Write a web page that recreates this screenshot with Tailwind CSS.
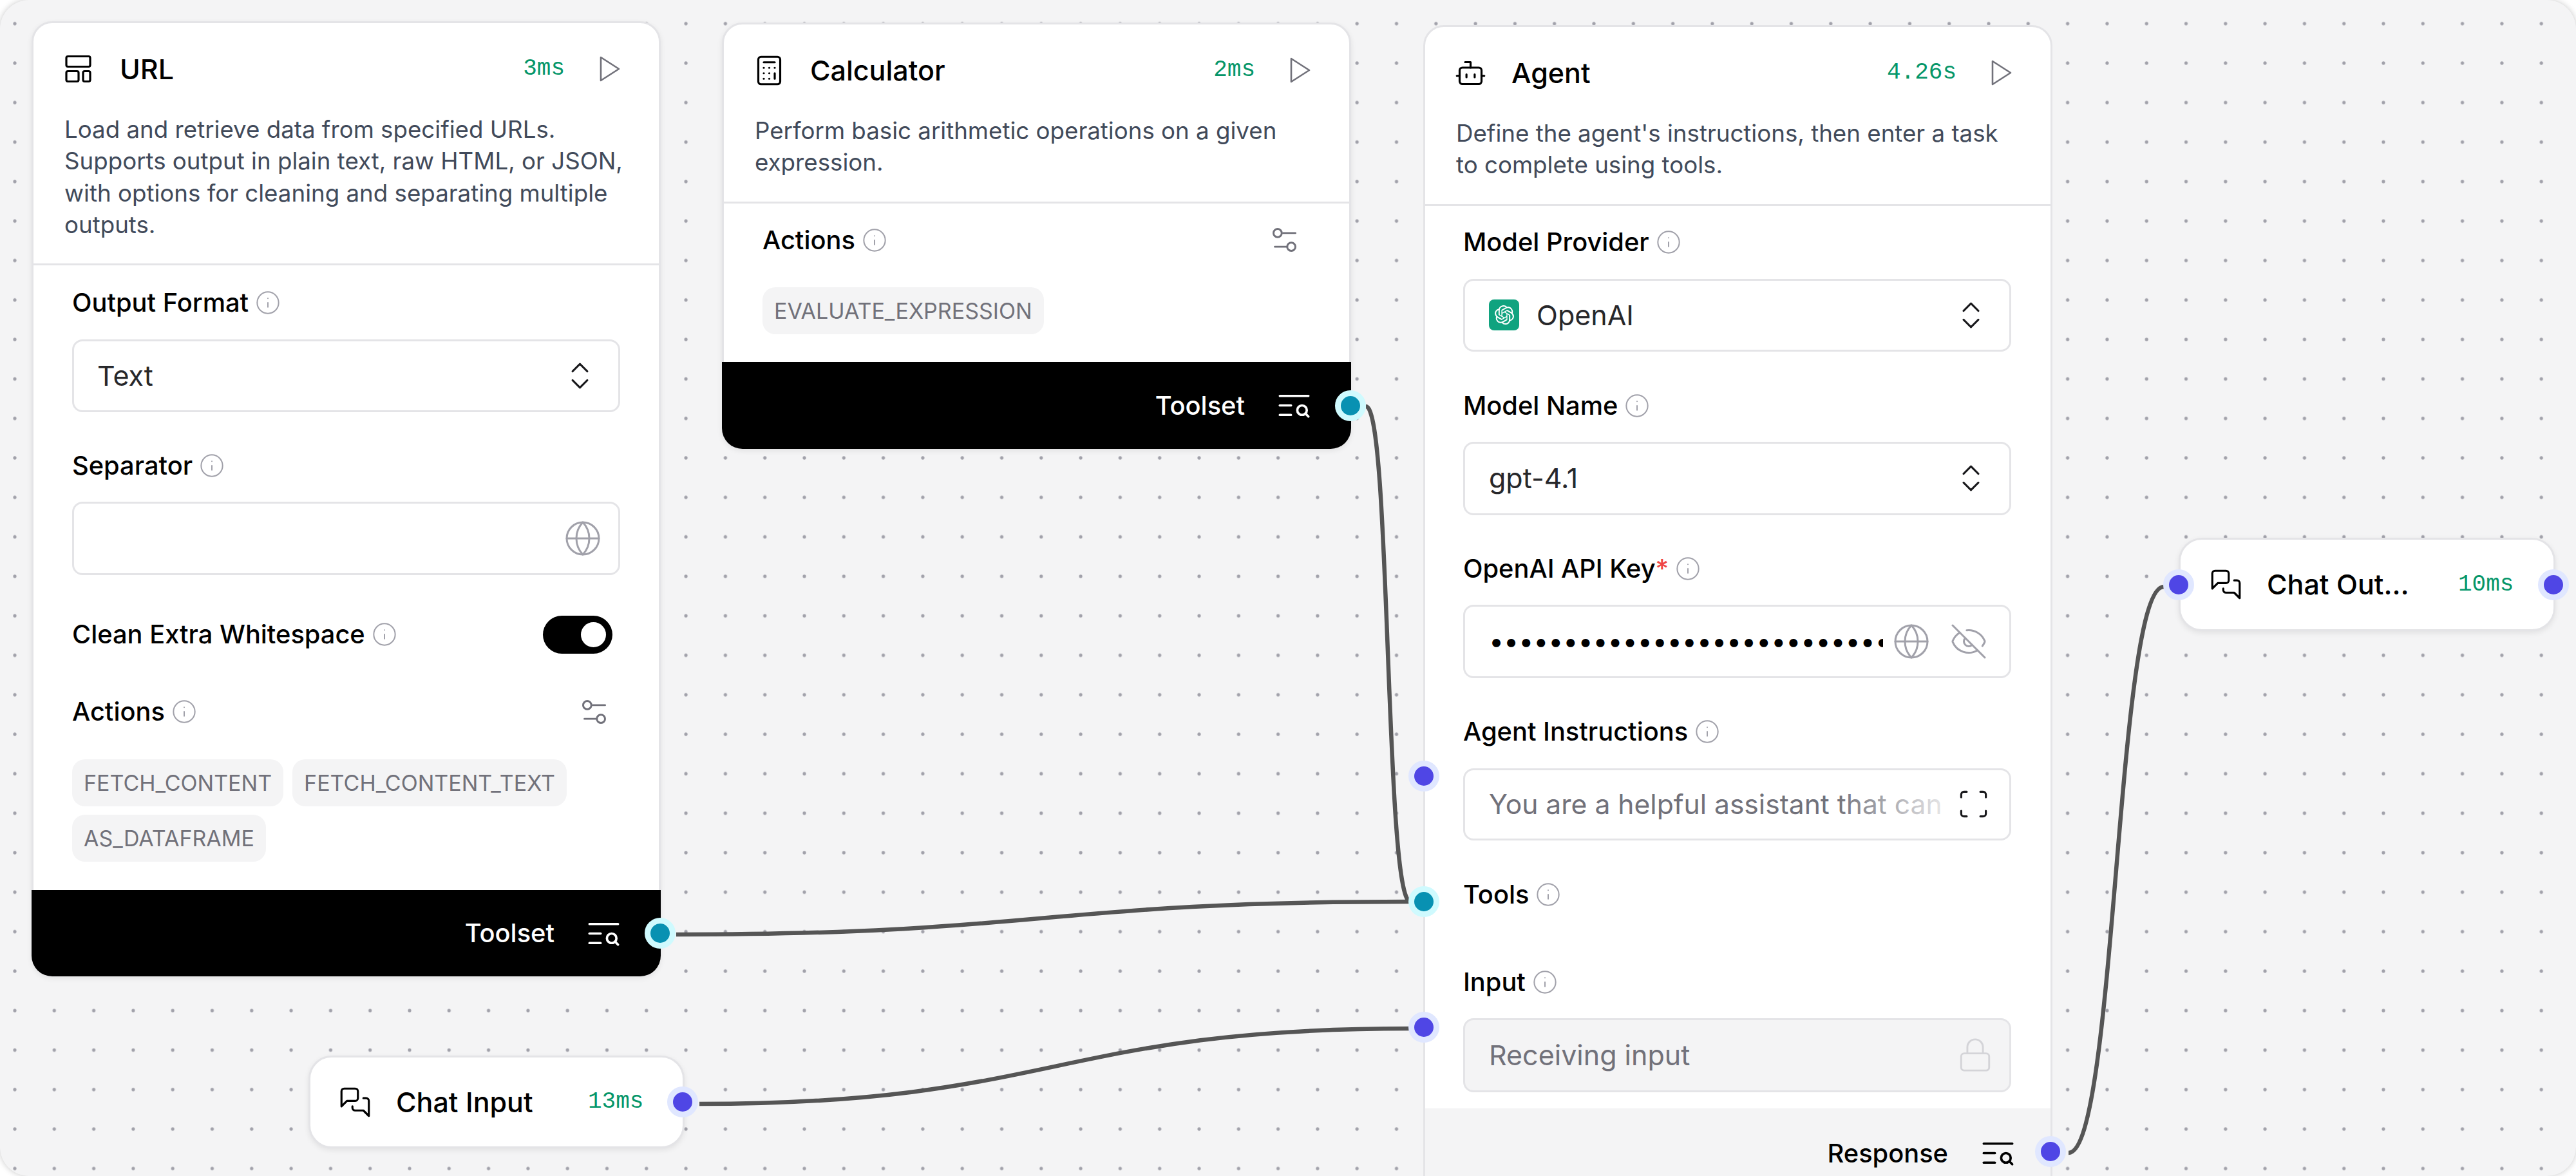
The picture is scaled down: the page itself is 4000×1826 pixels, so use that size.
<!DOCTYPE html>
<html lang="en">
<head>
    <meta charset="UTF-8">
    <title>Flow canvas</title>
    <script src="https://cdn.jsdelivr.net/npm/@tailwindcss/browser@4"></script>
</head>
<body class="bg-white font-['Inter',sans-serif] text-black">
    <!-- Icon sprites -->
    <svg width="0" height="0" class="absolute">
        <symbol id="i-info" viewBox="0 0 24 24" fill="none" stroke="currentColor" stroke-linecap="round" stroke-linejoin="round"><circle cx="12" cy="12" r="10"/><path d="M12 16v-4"/><path d="M12 8h.01"/></symbol>
        <symbol id="i-play" viewBox="0 0 24 24" fill="none" stroke="currentColor" stroke-linecap="round" stroke-linejoin="round"><polygon points="6 3 20 12 6 21 6 3"/></symbol>
        <symbol id="i-sliders" viewBox="0 0 24 24" fill="none" stroke="currentColor" stroke-linecap="round" stroke-linejoin="round"><path d="M20 7h-9"/><path d="M14 17H5"/><circle cx="17" cy="17" r="3"/><circle cx="7" cy="7" r="3"/></symbol>
        <symbol id="i-chevrons" viewBox="0 0 24 24" fill="none" stroke="currentColor" stroke-linecap="round" stroke-linejoin="round"><path d="m7 15 5 5 5-5"/><path d="m7 9 5-5 5 5"/></symbol>
        <symbol id="i-globe" viewBox="0 0 24 24" fill="none" stroke="currentColor" stroke-linecap="round" stroke-linejoin="round"><circle cx="12" cy="12" r="10"/><path d="M12 2a14.5 14.5 0 0 0 0 20 14.5 14.5 0 0 0 0-20"/><path d="M2 12h20"/></symbol>
        <symbol id="i-search" viewBox="0 0 24 24" fill="none" stroke="currentColor" stroke-linecap="round" stroke-linejoin="round"><path d="M21 6H3"/><path d="M10 12H3"/><path d="M10 18H3"/><circle cx="17" cy="15" r="3"/><path d="m21 19-1.9-1.9"/></symbol>
        <symbol id="i-chat" viewBox="0 0 24 24" fill="none" stroke="currentColor" stroke-linecap="round" stroke-linejoin="round"><path d="M14 9a2 2 0 0 1-2 2H6l-4 4V4a2 2 0 0 1 2-2h8a2 2 0 0 1 2 2z"/><path d="M18 9h2a2 2 0 0 1 2 2v11l-4-4h-6a2 2 0 0 1-2-2v-1"/></symbol>
    </svg>

    <div class="relative w-[4000px] h-[1826px] overflow-hidden rounded-[45px] bg-[#f4f4f5] shadow-[0_0_10px_rgba(0,0,0,0.22)]">
        <!-- Dot grid and edges -->
        <svg class="absolute inset-0" width="4000" height="1826" fill="none">
            <defs>
                <pattern id="dots" x="-7.65" y="6.05" width="61.3" height="61.3" patternUnits="userSpaceOnUse">
                    <circle cx="30.65" cy="30.65" r="2.6" fill="#a1a1aa"/>
                </pattern>
            </defs>
            <rect width="4000" height="1826" fill="url(#dots)"/>
            <g stroke="#555555" stroke-width="6.5">
                <path d="M1050 1451C1620 1451 1620 1400 2190 1400"/>
                <path d="M2121 631C2160 631 2150 1400 2190 1400"/>
                <path d="M1086 1714C1640 1714 1640 1597 2190 1597"/>
                <path d="M3212 1790C3286 1790 3286 911 3360 911"/>
            </g>
        </svg>

        <!-- URL node -->
        <div class="absolute left-[49px] top-[33px] w-[977px] h-[1483px] rounded-[32px] border-[3px] border-[#e4e4e7] bg-white shadow-[0_3px_8px_rgba(0,0,0,0.08)] flex flex-col">
            <div class="border-b-[3px] border-[#e4e4e7] pb-[36px]">
                <div class="mt-[41px] h-[60px] pl-[45px] pr-[54px] flex items-center">
                    <svg class="w-[51px] h-[51px] shrink-0" viewBox="0 0 51 51" fill="none" stroke="currentColor" stroke-width="3.2">
                        <rect x="6" y="5.5" width="37" height="16" rx="2.5"/><rect x="6" y="28.5" width="19" height="16" rx="2.5"/><rect x="32" y="28.5" width="11" height="16" rx="2.5"/>
                    </svg>
                    <span class="ml-[38px] text-[43px] font-medium">URL</span>
                    <span class="ml-auto font-['Liberation_Mono',monospace] text-[36px] text-[#059669]">3ms</span>
                    <svg class="ml-[44px] w-[48px] h-[48px] text-[#71717a]" stroke-width="1.3"><use href="#i-play"/></svg>
                </div>
                <p class="mt-[39px] pl-[48px] pr-[30px] text-[36.7px] leading-[49.3px] text-[#414a5a]">Load and retrieve data from specified URLs. Supports output in plain text, raw HTML, or JSON, with options for cleaning and separating multiple outputs.</p>
            </div>
            <div class="px-[60px] pt-[33px] flex-1">
                <div class="flex items-center gap-[10px] h-[50px] text-[39.8px] font-medium">Output Format <svg class="w-[40px] h-[40px] text-[#a1a1aa]" stroke-width="1.2"><use href="#i-info"/></svg></div>
                <div class="mt-[32px] h-[113px] rounded-[16px] border-[3px] border-[#e4e4e7] pl-[36px] pr-[32px] flex items-center justify-between text-[43px] text-[#27272a]">Text <svg class="w-[55px] h-[55px] text-[#18181b]" stroke-width="1.3"><use href="#i-chevrons"/></svg></div>
                <div class="mt-[58px] flex items-center gap-[10px] h-[50px] text-[39.8px] font-medium">Separator <svg class="w-[40px] h-[40px] text-[#a1a1aa]" stroke-width="1.2"><use href="#i-info"/></svg></div>
                <div class="mt-[31px] h-[114px] rounded-[16px] border-[3px] border-[#e4e4e7] pr-[25px] flex items-center justify-end"><svg class="w-[60px] h-[60px] text-[#a1a1aa]" stroke-width="1.2"><use href="#i-globe"/></svg></div>
                <div class="mt-[62px] h-[60px] flex items-center justify-between">
                    <div class="flex items-center gap-[10px] text-[39.8px] font-medium">Clean Extra Whitespace <svg class="w-[40px] h-[40px] text-[#a1a1aa]" stroke-width="1.2"><use href="#i-info"/></svg></div>
                    <div class="mr-[12px] w-[108px] h-[59px] rounded-full bg-black flex items-center justify-end pr-[10px]"><div class="w-[39px] h-[39px] rounded-full bg-white"></div></div>
                </div>
                <div class="mt-[65px] h-[50px] flex items-center justify-between">
                    <div class="flex items-center gap-[10px] text-[39.8px] font-medium">Actions <svg class="w-[40px] h-[40px] text-[#a1a1aa]" stroke-width="1.2"><use href="#i-info"/></svg></div>
                    <svg class="mr-[15px] w-[51px] h-[51px] text-[#71717a]" stroke-width="1.4"><use href="#i-sliders"/></svg>
                </div>
                <div class="mt-[49px] flex flex-wrap gap-x-[14px] gap-y-[13px] text-[34px] text-[#71717a]">
                    <span class="h-[73px] px-[18px] rounded-[20px] bg-[#f4f4f5] flex items-center">FETCH_CONTENT</span>
                    <span class="h-[73px] px-[18px] rounded-[20px] bg-[#f4f4f5] flex items-center">FETCH_CONTENT_TEXT</span>
                    <span class="h-[73px] px-[18px] rounded-[20px] bg-[#f4f4f5] flex items-center">AS_DATAFRAME</span>
                </div>
            </div>
            <div class="relative -mx-[3px] -mb-[3px] h-[134px] rounded-b-[32px] bg-black text-white pr-[59px] flex items-center justify-end text-[39.8px] font-medium">
                Toolset
                <svg class="ml-[47px] w-[59px] h-[59px]" stroke-width="1.5"><use href="#i-search"/></svg>
                <div class="absolute right-[-23px] top-1/2 -translate-y-1/2 w-[48px] h-[48px] rounded-full border-[9px] border-[#cffafe] bg-[#0891b2]"></div>
            </div>
        </div>

        <!-- Calculator node -->
        <div class="absolute left-[1121px] top-[35px] w-[977px] h-[662px] rounded-[32px] border-[3px] border-[#e4e4e7] bg-white shadow-[0_3px_8px_rgba(0,0,0,0.08)] flex flex-col">
            <div class="border-b-[3px] border-[#e4e4e7] pb-[36px]">
                <div class="mt-[41px] h-[60px] pl-[45px] pr-[54px] flex items-center">
                    <svg class="w-[51px] h-[51px] shrink-0" viewBox="0 0 24 24" fill="none" stroke="currentColor" stroke-width="1.5" stroke-linecap="round" stroke-linejoin="round">
                        <rect width="16" height="20" x="4" y="2" rx="2"/><line x1="8" x2="16" y1="6" y2="6"/><line x1="16" x2="16" y1="14" y2="18"/><path d="M16 10h.01"/><path d="M12 10h.01"/><path d="M8 10h.01"/><path d="M12 14h.01"/><path d="M8 14h.01"/><path d="M12 18h.01"/><path d="M8 18h.01"/>
                    </svg>
                    <span class="ml-[38px] text-[43px] font-medium">Calculator</span>
                    <span class="ml-auto font-['Liberation_Mono',monospace] text-[36px] text-[#059669]">2ms</span>
                    <svg class="ml-[44px] w-[48px] h-[48px] text-[#71717a]" stroke-width="1.3"><use href="#i-play"/></svg>
                </div>
                <p class="mt-[39px] pl-[48px] pr-[30px] text-[36.7px] leading-[49.3px] text-[#414a5a]">Perform basic arithmetic operations on a given expression.</p>
            </div>
            <div class="px-[60px] pt-[32px] flex-1">
                <div class="h-[50px] flex items-center justify-between">
                    <div class="flex items-center gap-[10px] text-[39.8px] font-medium">Actions <svg class="w-[40px] h-[40px] text-[#a1a1aa]" stroke-width="1.2"><use href="#i-info"/></svg></div>
                    <svg class="mr-[15px] w-[51px] h-[51px] text-[#71717a]" stroke-width="1.4"><use href="#i-sliders"/></svg>
                </div>
                <div class="mt-[48px] flex flex-wrap text-[34px] text-[#71717a]">
                    <span class="h-[73px] px-[18px] rounded-[20px] bg-[#f4f4f5] flex items-center">EVALUATE_EXPRESSION</span>
                </div>
            </div>
            <div class="relative -mx-[3px] -mb-[3px] h-[135px] rounded-b-[32px] bg-black text-white pr-[59px] flex items-center justify-end text-[39.8px] font-medium">
                Toolset
                <svg class="ml-[47px] w-[59px] h-[59px]" stroke-width="1.5"><use href="#i-search"/></svg>
                <div class="absolute right-[-23px] top-1/2 -translate-y-1/2 w-[48px] h-[48px] rounded-full border-[9px] border-[#cffafe] bg-[#0891b2]"></div>
            </div>
        </div>

        <!-- Agent node, runs past the bottom of the canvas -->
        <div class="absolute left-[2210px] top-[39px] w-[977px] h-[1830px] rounded-[32px] border-[3px] border-[#e4e4e7] bg-white flex flex-col">
            <div class="border-b-[3px] border-[#e4e4e7] pb-[36px]">
                <div class="mt-[41px] h-[60px] pl-[45px] pr-[54px] flex items-center">
                    <svg class="w-[51px] h-[51px] shrink-0" viewBox="0 0 24 24" fill="none" stroke="currentColor" stroke-width="1.5" stroke-linecap="round" stroke-linejoin="round">
                        <path d="M12 8V4H8"/><rect width="16" height="12" x="4" y="8" rx="2"/><path d="M2 14h2"/><path d="M20 14h2"/><path d="M15 13v2"/><path d="M9 13v2"/>
                    </svg>
                    <span class="ml-[38px] text-[43px] font-medium">Agent</span>
                    <span class="ml-auto font-['Liberation_Mono',monospace] text-[36px] text-[#059669]">4.26s</span>
                    <svg class="ml-[44px] w-[48px] h-[48px] text-[#71717a]" stroke-width="1.3"><use href="#i-play"/></svg>
                </div>
                <p class="mt-[39px] pl-[48px] pr-[30px] text-[36.7px] leading-[49.3px] text-[#414a5a]">Define the agent's instructions, then enter a task<br>to complete using tools.</p>
            </div>
            <div class="pl-[59px] pr-[61px] pt-[31px]">
                <div class="flex items-center gap-[10px] h-[50px] text-[39.8px] font-medium">Model Provider <svg class="w-[40px] h-[40px] text-[#a1a1aa]" stroke-width="1.2"><use href="#i-info"/></svg></div>
                <div class="mt-[32px] h-[113px] rounded-[16px] border-[3px] border-[#e4e4e7] pl-[37px] pr-[32px] flex items-center text-[43px] text-[#27272a]">
                    <span class="w-[47px] h-[48px] rounded-[8px] bg-[#10a37f] flex items-center justify-center">
                        <svg class="w-[30px] h-[30px]" viewBox="0 0 24 24" fill="#fff"><path d="M22.2819 9.8211a5.9847 5.9847 0 0 0-.5157-4.9108 6.0462 6.0462 0 0 0-6.5098-2.9A6.0651 6.0651 0 0 0 4.9807 4.1818a5.9847 5.9847 0 0 0-3.9977 2.9 6.0462 6.0462 0 0 0 .7427 7.0966 5.98 5.98 0 0 0 .511 4.9107 6.051 6.051 0 0 0 6.5146 2.9001A5.9847 5.9847 0 0 0 13.2599 24a6.0557 6.0557 0 0 0 5.7718-4.2058 5.9894 5.9894 0 0 0 3.9977-2.9001 6.0557 6.0557 0 0 0-.7475-7.0729zm-9.022 12.6081a4.4755 4.4755 0 0 1-2.8764-1.0408l.1419-.0804 4.7783-2.7582a.7948.7948 0 0 0 .3927-.6813v-6.7369l2.02 1.1686a.071.071 0 0 1 .038.052v5.5826a4.504 4.504 0 0 1-4.4945 4.4944zm-9.6607-4.1254a4.4708 4.4708 0 0 1-.5346-3.0137l.142.0852 4.783 2.7582a.7712.7712 0 0 0 .7806 0l5.8428-3.3685v2.3324a.0804.0804 0 0 1-.0332.0615L9.74 19.9502a4.4992 4.4992 0 0 1-6.1408-1.6464zM2.3408 7.8956a4.485 4.485 0 0 1 2.3655-1.9728V11.6a.7664.7664 0 0 0 .3879.6765l5.8144 3.3543-2.0201 1.1685a.0757.0757 0 0 1-.071 0l-4.8303-2.7865A4.504 4.504 0 0 1 2.3408 7.872zm16.5963 3.8558L13.1038 8.364 15.1192 7.2a.0757.0757 0 0 1 .071 0l4.8303 2.7913a4.4944 4.4944 0 0 1-.6765 8.1042v-5.6772a.79.79 0 0 0-.407-.667zm2.0107-3.0231l-.142-.0852-4.7735-2.7818a.7759.7759 0 0 0-.7854 0L9.409 9.2297V6.8974a.0662.0662 0 0 1 .0284-.0615l4.8303-2.7866a4.4992 4.4992 0 0 1 6.6802 4.66zM8.3065 12.863l-2.02-1.1638a.0804.0804 0 0 1-.038-.0567V6.0742a4.4992 4.4992 0 0 1 7.3757-3.4537l-.142.0805L8.704 5.459a.7948.7948 0 0 0-.3927.6813zm1.0976-2.3654l2.602-1.4998 2.6069 1.4998v2.9994l-2.5974 1.4997-2.6067-1.4997Z"/></svg>
                    </span>
                    <span class="ml-[27px]">OpenAI</span>
                    <svg class="ml-auto w-[55px] h-[55px] text-[#18181b]" stroke-width="1.3"><use href="#i-chevrons"/></svg>
                </div>
                <div class="mt-[59px] flex items-center gap-[10px] h-[50px] text-[39.8px] font-medium">Model Name <svg class="w-[40px] h-[40px] text-[#a1a1aa]" stroke-width="1.2"><use href="#i-info"/></svg></div>
                <div class="mt-[31px] h-[114px] rounded-[16px] border-[3px] border-[#e4e4e7] pl-[37px] pr-[32px] flex items-center justify-between text-[43px] text-[#27272a]">gpt-4.1 <svg class="w-[55px] h-[55px] text-[#18181b]" stroke-width="1.3"><use href="#i-chevrons"/></svg></div>
                <div class="mt-[58px] flex items-center gap-[10px] h-[50px] text-[39.8px] font-medium"><span>OpenAI API Key<span class="text-[#ef4444]">*</span></span> <svg class="w-[40px] h-[40px] text-[#a1a1aa]" stroke-width="1.2"><use href="#i-info"/></svg></div>
                <div class="mt-[31px] h-[114px] rounded-[16px] border-[3px] border-[#e4e4e7] pl-[37px] pr-[33px] flex items-center">
                    <div class="w-[612px] overflow-hidden whitespace-nowrap text-[41px] leading-none">••••••••••••••••••••••••••••••••••</div>
                    <svg class="ml-[14px] w-[60px] h-[60px] text-[#a1a1aa]" stroke-width="1.2"><use href="#i-globe"/></svg>
                    <svg class="ml-auto w-[60px] h-[60px] text-[#a1a1aa]" viewBox="0 0 24 24" fill="none" stroke="currentColor" stroke-width="1.2" stroke-linecap="round" stroke-linejoin="round">
                        <path d="M10.733 5.076a10.744 10.744 0 0 1 11.205 6.575 1 1 0 0 1 0 .696 10.747 10.747 0 0 1-1.444 2.49"/><path d="M14.084 14.158a3 3 0 0 1-4.242-4.242"/><path d="M17.479 17.499a10.75 10.75 0 0 1-15.417-5.151 1 1 0 0 1 0-.696 10.75 10.75 0 0 1 4.446-5.143"/><path d="m2 2 20 20"/>
                    </svg>
                </div>
                <div class="mt-[58px] flex items-center gap-[10px] h-[50px] text-[39.8px] font-medium">Agent Instructions <svg class="w-[40px] h-[40px] text-[#a1a1aa]" stroke-width="1.2"><use href="#i-info"/></svg></div>
                <div class="relative mt-[32px] h-[112px] rounded-[16px] border-[3px] border-[#e4e4e7] pl-[37px] pr-[30px] flex items-center text-[42.6px] text-[#71717a]">
                    <span class="whitespace-nowrap">You are a helpful assistant that can</span>
                    <div class="absolute left-[575px] top-0 bottom-0 w-[172px] bg-linear-to-r from-transparent to-white/85"></div>
                    <svg class="ml-auto w-[51px] h-[51px] text-[#18181b]" viewBox="0 0 24 24" fill="none" stroke="currentColor" stroke-width="1.5" stroke-linecap="round" stroke-linejoin="round">
                        <path d="M3 7V5a2 2 0 0 1 2-2h2"/><path d="M17 3h2a2 2 0 0 1 2 2v2"/><path d="M21 17v2a2 2 0 0 1-2 2h-2"/><path d="M7 21H5a2 2 0 0 1-2-2v-2"/>
                    </svg>
                </div>
                <div class="mt-[59px] flex items-center gap-[10px] h-[50px] text-[39.8px] font-medium">Tools <svg class="w-[40px] h-[40px] text-[#a1a1aa]" stroke-width="1.2"><use href="#i-info"/></svg></div>
                <div class="mt-[86px] flex items-center gap-[10px] h-[50px] text-[39.8px] font-medium">Input <svg class="w-[40px] h-[40px] text-[#a1a1aa]" stroke-width="1.2"><use href="#i-info"/></svg></div>
                <div class="mt-[31px] h-[115px] rounded-[16px] border-[3px] border-[#e4e4e7] bg-[#f4f4f5] pl-[37px] pr-[24px] flex items-center justify-between text-[43px] text-[#71717a]">Receiving input
                    <svg class="w-[58px] h-[58px] text-[#d4d4d8]" viewBox="0 0 24 24" fill="none" stroke="currentColor" stroke-width="1.2" stroke-linecap="round" stroke-linejoin="round"><rect width="18" height="11" x="3" y="11" rx="2"/><path d="M7 11V7a5 5 0 0 1 10 0v4"/></svg>
                </div>
            </div>
            <div class="mt-[25px] h-[140px] bg-[#f4f4f5] pr-[52px] flex items-center justify-end text-[39.8px] font-medium">
                Response
                <svg class="ml-[48px] w-[59px] h-[59px]" stroke-width="1.5"><use href="#i-search"/></svg>
            </div>
            <!-- Handles -->
            <div class="absolute left-[-26px] top-[1139px] w-[48px] h-[48px] rounded-full border-[9px] border-[#e0e7ff] bg-[#4f46e5]"></div>
            <div class="absolute left-[-26px] top-[1334px] w-[48px] h-[48px] rounded-full border-[9px] border-[#cffafe] bg-[#0891b2]"></div>
            <div class="absolute left-[-26px] top-[1529px] w-[48px] h-[48px] rounded-full border-[9px] border-[#e0e7ff] bg-[#4f46e5]"></div>
            <div class="absolute right-[-24px] top-[1722px] w-[48px] h-[48px] rounded-full border-[9px] border-[#e0e7ff] bg-[#4f46e5]"></div>
        </div>

        <!-- Chat Input node -->
        <div class="absolute left-[479px] top-[1639px] w-[584px] h-[144px] rounded-[36px] border-[3px] border-[#e4e4e7] bg-white shadow-[0_3px_8px_rgba(0,0,0,0.08)] pl-[44px] flex items-center">
            <svg class="w-[51px] h-[51px] shrink-0" stroke-width="1.5"><use href="#i-chat"/></svg>
            <span class="ml-[38px] w-[298px] truncate text-[43px] font-medium">Chat Input</span>
            <span class="font-['Liberation_Mono',monospace] text-[36px] text-[#059669]">13ms</span>
            <div class="absolute right-[-24px] top-1/2 -translate-y-1/2 w-[48px] h-[48px] rounded-full border-[9px] border-[#e0e7ff] bg-[#4f46e5]"></div>
        </div>

        <!-- Chat Output node -->
        <div class="absolute left-[3383px] top-[835px] w-[585px] h-[145px] rounded-[36px] border-[3px] border-[#e4e4e7] bg-white shadow-[0_3px_8px_rgba(0,0,0,0.08)] pl-[45px] flex items-center">
            <svg class="w-[51px] h-[51px] shrink-0" stroke-width="1.5"><use href="#i-chat"/></svg>
            <span class="ml-[38px] w-[226px] truncate text-[43px] font-medium">Chat Output</span>
            <span class="ml-[71px] font-['Liberation_Mono',monospace] text-[36px] text-[#059669]">10ms</span>
            <div class="absolute left-[-27px] top-1/2 -translate-y-1/2 w-[48px] h-[48px] rounded-full border-[9px] border-[#e0e7ff] bg-[#4f46e5]"></div>
            <div class="absolute right-[-24px] top-1/2 -translate-y-1/2 w-[48px] h-[48px] rounded-full border-[9px] border-[#e0e7ff] bg-[#4f46e5]"></div>
        </div>
    </div>
</body>
</html>
